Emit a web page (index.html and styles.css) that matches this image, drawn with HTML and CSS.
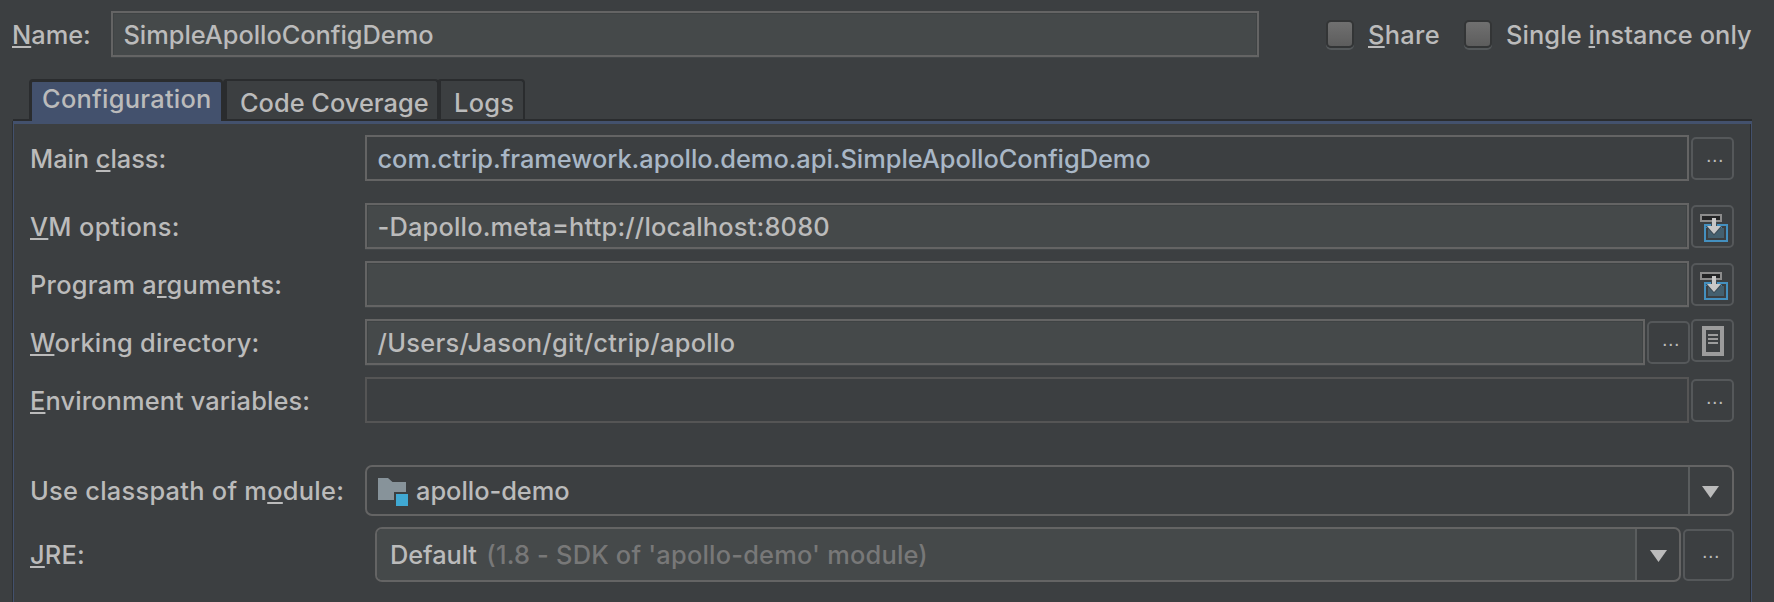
FILE: index.html
```html
<!DOCTYPE html>
<html lang="en">
<head>
<meta charset="utf-8">
<title>Run configuration</title>
<link rel="stylesheet" href="styles.css">
</head>
<body>
<svg class="defs" width="0" height="0" aria-hidden="true">
  <symbol id="expand" viewBox="0 0 28 28">
    <rect x="1" y="1" width="20" height="6" fill="#232425" stroke="#8c8c8c" stroke-width="2"/>
    <rect x="5" y="11" width="22" height="16" fill="#3c3f41" stroke="#4490bf" stroke-width="2"/>
    <path d="M6 12h16v2H6z" fill="#4490bf"/>
    <rect x="8" y="14" width="16" height="10" fill="#44606f"/>
    <path d="M11 8h6v4h5.500l-8.500 9.500L5.500 12H11z" fill="#3c4b55"/>
    <path d="M12 4h4v8h5l-7 8-7-8h5z" fill="#c8c8c8"/>
  </symbol>
</svg>
<main class="dialog">
  <header class="top">
    <label class="label name-label"><u>N</u>ame:</label>
    <div class="field name-field"><span class="t-simple">SimpleApolloConfigDemo</span></div>
    <div class="check share"><i class="box"></i><span><u>S</u>hare</span></div>
    <div class="check single"><i class="box"></i><span>Single <u>i</u>nstance only</span></div>
  </header>
  <nav class="tabs">
    <div class="tab active"><span>Configuration</span></div>
    <div class="tab coverage"><span>Code Coverage</span></div>
    <div class="tab logs"><span>Logs</span></div>
  </nav>
  <section class="panel">
    <div class="row main-class">
      <label class="label t-main">Main <u>c</u>lass:</label>
      <div class="field flat link"><span class="t-com">com.ctrip.framework.apollo.demo.api.SimpleApolloConfigDemo</span></div>
      <div class="btn dots">...</div>
    </div>
    <div class="row vm">
      <label class="label t-vm"><u>V</u>M options:</label>
      <div class="field"><span class="t-meta">-Dapollo.meta=http://localhost:8080</span></div>
      <div class="btn"><svg class="icon" width="28" height="28"><use href="#expand"/></svg></div>
    </div>
    <div class="row">
      <label class="label t-prog">Program a<u>r</u>guments:</label>
      <div class="field"></div>
      <div class="btn"><svg class="icon" width="28" height="28"><use href="#expand"/></svg></div>
    </div>
    <div class="row">
      <label class="label t-work"><u>W</u>orking directory:</label>
      <div class="field"><span class="t-path">/Users/Jason/git/ctrip/apollo</span></div>
      <div class="btn dots">...</div>
      <div class="btn doc">
        <svg width="22" height="30" viewBox="0 0 22 30"><path d="M2 2h18v26H2z" fill="none" stroke="#9c9c9c" stroke-width="4"/><path d="M6 9h10M6 13h10M6 17h10" stroke="#9c9c9c" stroke-width="2"/></svg>
      </div>
    </div>
    <div class="row">
      <label class="label t-env"><u>E</u>nvironment variables:</label>
      <div class="field flat dim"></div>
      <div class="btn dots">...</div>
    </div>
    <div class="row module">
      <label class="label t-use">Use classpath of m<u>o</u>dule:</label>
      <div class="combo">
        <div class="value">
          <svg class="folder" width="30" height="28" viewBox="0 0 30 28"><path d="M0 0h10l4.500 4H28v10H16v8H0z" fill="#87939a"/><path d="M18 16h12v12H18z" fill="#40a9d3"/></svg>
          <span class="t-demo">apollo-demo</span>
        </div>
        <div class="arrow"><svg width="17" height="12" viewBox="0 0 17 12"><path d="M0 0h17L8.500 12z" fill="#bbb"/></svg></div>
      </div>
    </div>
    <div class="row jre">
      <label class="label t-jre"><u>J</u>RE:</label>
      <div class="combo editable">
        <div class="value"><span class="t-def">Default</span><span class="hint">(1.8 - SDK of 'apollo-demo' module)</span></div>
        <div class="arrow"><svg width="17" height="12" viewBox="0 0 17 12"><path d="M0 0h17L8.500 12z" fill="#bbb"/></svg></div>
      </div>
      <div class="btn dots large">...</div>
    </div>
  </section>
</main>
</body>
</html>
```
FILE: styles.css
```css
* { box-sizing: border-box; }
html, body { margin: 0; background: #3c3f41; }
body {
  width: 1774px; height: 602px; overflow: hidden;
  font: 500 25.4px/31px Inter, sans-serif;
  color: #bbb;
}
.defs { display: none; }
svg { display: block; flex: none; }
u {
  text-decoration: underline;
  text-decoration-thickness: 2px;
  text-underline-offset: 2px;
  text-decoration-skip-ink: none;
}
.dialog { display: flex; flex-direction: column; height: 602px; padding: 11px 22px 0 12px; }

.top { display: flex; height: 46px; }
.label { flex: none; line-height: 47px; white-space: pre; }
.name-label { width: 99px; letter-spacing: 0; }
.field {
  display: flex; flex: 1; height: 46px; padding-left: 10.500px;
  border: 2px solid #646464;
  background: #45494a;
  box-shadow: inset 1px 1px #3f4344, inset -1px 0 #3f4344, 0 1px #434749;
  line-height: 43px; white-space: pre;
}
.field.flat { background: #3c3f41; box-shadow: none; }
.field.dim { border-color: #555; }
.field.link { color: #a9b7c6; }
.name-field { flex: 0 0 1148px; }

.check { display: flex; flex: none; line-height: 47px; white-space: pre; }
.box {
  flex: none; width: 28px; height: 28px; margin-top: 9px;
  border: 2px solid #333536; border-radius: 5px;
  background: linear-gradient(#707070, #5d5d5d);
  box-shadow: 0 2px #54585a;
}
.share { margin-left: 67px; width: 138px; letter-spacing: .3px; }
.single { letter-spacing: .1px; }
.check span { margin-left: 14px; }

.tabs { position: relative; display: flex; margin: 22px 0 0 17px; height: 40px; }
.tab {
  height: 40px; border: 2px solid #2a2c2e; border-bottom: 0;
  border-radius: 4px 4px 0 0; white-space: pre;
}
/* The selected tab runs into the panel's top edge. */
.tab.active {
  width: 194px; height: 42px; padding: 1px 0 0 10px;
  border-width: 3px 2px 0 3px;
  background: #43516d; letter-spacing: .27px;
}
.coverage { width: 216px; padding: 6px 0 0 13px; border-left-width: 4px; letter-spacing: 0; margin-right: -2px; }
.logs { width: 88px; padding: 6px 0 0 13px; border-left-width: 4px; letter-spacing: .3px; }

.panel {
  display: flex; flex-direction: column; flex: 1;
  width: 1739px; margin: 2px 0 0 1px; padding: 11px 17px 0 16px;
  border: 1px solid #43516d; border-top-width: 3px; border-bottom: 0;
  box-shadow: -1px 0 #2e3133, inset -1px 0 #2a2c2e, 0 -2px #2a2c2e;
}
.row { display: flex; height: 46px; margin-bottom: 12px; }
.row .label { width: 335px; }
.main-class { margin-bottom: 22px; }
.btn {
  flex: none; width: 43px; height: 43px; margin: 2px 0 0 2px;
  border: 2px solid #55585a; border-radius: 5px;
}
.btn .icon { margin: 7px 0 0 7px; }
.btn.doc { margin-top: 0; margin-left: 1px; padding: 5px 0 0 9px; }
.dots {
  padding: 6px 0 0 13px;
  font: 20px/20px "Liberation Sans", sans-serif; letter-spacing: .44px;
}
.dots.large { width: 51px; height: 52px; padding: 10px 0 0 17px; }
.module { height: 51px; margin: 30px 0 11px; }
.row.module .label { line-height: 52px; }
.combo { display: flex; flex: none; width: 1369px; height: 51px; border: 2px solid #646464; border-radius: 7px; }
.value { display: flex; flex: 1; padding-left: 11px; line-height: 48px; white-space: pre; }
.folder { margin: 11px 8px 0 0; }
.arrow { display: flex; flex: none; width: 44px; padding: 19px 0 0 12px; border-left: 2px solid #5a5d5e; }
.jre { height: 55px; margin: 0; }
.row.jre .label { width: 345px; line-height: 55px; letter-spacing: .2px; }
.editable { width: 1306px; height: 55px; }
.editable .value { padding-left: 13px; line-height: 52px; background: #45494a; border-radius: 5px 0 0 5px; }
.editable .arrow { padding: 21px 0 0 13px; }
.hint { margin-left: 9.500px; color: #787878; letter-spacing: .21px; }

.t-simple { letter-spacing: -.04px; }
.t-main { letter-spacing: -.04px; }
.t-com { letter-spacing: -.03px; }
.t-vm { letter-spacing: .34px; }
.t-meta { letter-spacing: .19px; }
.t-prog { letter-spacing: .27px; }
.t-work { letter-spacing: .23px; }
.t-path { letter-spacing: .29px; }
.t-env { letter-spacing: .12px; }
.t-use { letter-spacing: .27px; }
.t-demo { letter-spacing: -.02px; }
.t-def { letter-spacing: -.1px; }
```
